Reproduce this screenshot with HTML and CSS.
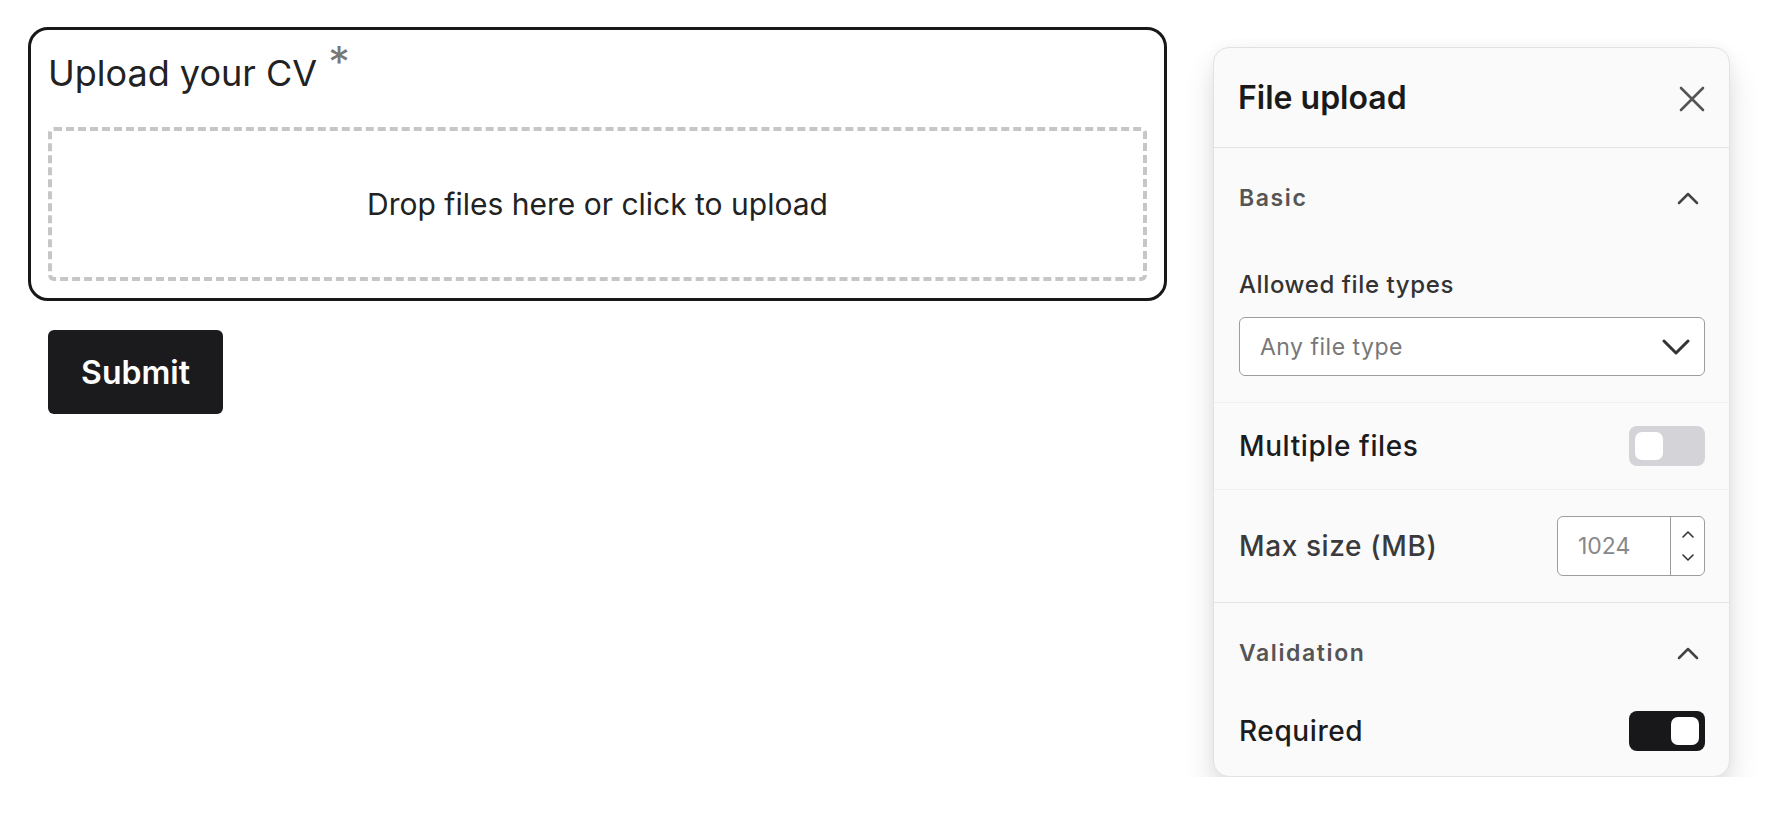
FILE: index.html
```html
<!DOCTYPE html>
<html lang="en">
<head>
<meta charset="utf-8">
<title>File upload</title>
<link rel="stylesheet" href="styles.css">
</head>
<body>
<div class="page">
  <div class="form-col">
    <div class="field-card">
      <div class="field-title">Upload your CV <span class="req">*</span></div>
      <div class="dropzone">Drop files here or click to upload</div>
    </div>
    <button class="submit" type="button">Submit</button>
  </div>

  <aside class="panel">
    <div class="panel-head">
      <div class="panel-title">File upload</div>
      <svg class="close" width="28" height="28" viewBox="0 0 28 28" fill="none" stroke="#555" stroke-width="2.6" stroke-linecap="round"><path d="M3 3 L25 25 M25 3 L3 25"/></svg>
    </div>

    <div class="section-head">
      <span class="section-name">Basic</span>
      <svg class="chev-up" width="22" height="14" viewBox="0 0 22 14" fill="none" stroke="#444" stroke-width="2.5" stroke-linecap="round" stroke-linejoin="round"><path d="M2 12 L11 3 L20 12"/></svg>
    </div>
    <div class="field-stack">
      <div class="label">Allowed file types</div>
      <div class="select">
        <span class="placeholder">Any file type</span>
        <svg width="28" height="18" viewBox="0 0 28 18" fill="none" stroke="#333" stroke-width="3" stroke-linecap="round" stroke-linejoin="round"><path d="M2 3 L14 15 L26 3"/></svg>
      </div>
    </div>
    <div class="row row-multi">
      <span class="row-label">Multiple files</span>
      <span class="toggle"><span class="knob"></span></span>
    </div>
    <div class="row row-size">
      <span class="row-label muted">Max size (MB)</span>
      <div class="number">
        <span class="num-value">1024</span>
        <span class="stepper">
          <svg width="14" height="9" viewBox="0 0 14 9" fill="none" stroke="#333" stroke-width="1.6" stroke-linecap="round" stroke-linejoin="round"><path d="M2 7 L7 2 L12 7"/></svg>
          <svg width="14" height="9" viewBox="0 0 14 9" fill="none" stroke="#333" stroke-width="1.6" stroke-linecap="round" stroke-linejoin="round"><path d="M2 2 L7 7 L12 2"/></svg>
        </span>
      </div>
    </div>

    <div class="section-head">
      <span class="section-name">Validation</span>
      <svg class="chev-up" width="22" height="14" viewBox="0 0 22 14" fill="none" stroke="#444" stroke-width="2.5" stroke-linecap="round" stroke-linejoin="round"><path d="M2 12 L11 3 L20 12"/></svg>
    </div>
    <div class="row row-required">
      <span class="row-label">Required</span>
      <span class="toggle on"><span class="knob"></span></span>
    </div>
  </aside>
</div>
</body>
</html>
```

FILE: styles.css
```css
* { box-sizing: border-box; }

html, body {
  margin: 0;
  padding: 0;
  background: #ffffff;
  font-family: Inter, "Noto Sans", "Liberation Sans", sans-serif;
  color: #1c1c1e;
}

.page {
  display: flex;
  align-items: flex-start;
  gap: 46px;
  padding: 27px 0 0 28px;
}

.form-col {
  width: 1139px;
  display: flex;
  flex-direction: column;
  align-items: flex-start;
}

.field-card {
  width: 100%;
  border: 3px solid #18181b;
  border-radius: 20px;
  padding: 21px 17px 17px;
  background: #fff;
}

.field-title {
  font-size: 36px;
  line-height: 44px;
  height: 44px;
  font-weight: 400;
  color: #222;
}

.req {
  color: #777;
  font-size: 43px;
  line-height: 0;
  vertical-align: 9px;
  margin-left: 1px;
}

.dropzone {
  margin-top: 32px;
  height: 154px;
  border: 4px dashed #c6c6c6;
  border-radius: 6px;
  display: flex;
  align-items: center;
  justify-content: center;
  font-size: 30px;
  color: #222;
}

.submit {
  margin: 29px 0 0 20px;
  width: 175px;
  height: 84px;
  border: none;
  border-radius: 6px;
  background: #1b1b1d;
  color: #fff;
  font-family: inherit;
  font-size: 32px;
  font-weight: 600;
  padding: 0;
}

/* panel */
.panel {
  margin-top: 20px;
  width: 517px;
  background: #fafafa;
  border: 1px solid #e2e2e2;
  border-radius: 16px;
  box-shadow: 0 18px 30px rgba(0, 0, 0, 0.13), 0 0 14px rgba(0, 0, 0, 0.04);
  overflow: hidden;
}

.panel-head {
  height: 100px;
  border-bottom: 1px solid #e3e3e3;
  padding: 0 23px 0 24px;
  display: flex;
  align-items: center;
  justify-content: space-between;
}

.panel-title {
  font-size: 32px;
  font-weight: 600;
  color: #1a1a1a;
}

.close { margin-top: 2px; }

.section-head {
  height: 80px;
  padding: 20px 30px 0 25px;
  display: flex;
  align-items: center;
  justify-content: space-between;
}

.section-name {
  font-size: 23px;
  font-weight: 600;
  letter-spacing: 1.6px;
  color: #555;
}

.field-stack {
  padding: 43px 24px 26px 25px;
  border-bottom: 1px solid #f0f0f0;
}

.label {
  font-size: 24px;
  line-height: 28px;
  font-weight: 500;
  letter-spacing: 0.6px;
  color: #333;
}

.select {
  margin-top: 18px;
  height: 59px;
  background: #fff;
  border: 1.5px solid #9d9d9d;
  border-radius: 6px;
  padding: 0 14px 0 20px;
  display: flex;
  align-items: center;
  justify-content: space-between;
}

.placeholder {
  font-size: 23px;
  letter-spacing: 0.5px;
  color: #777;
}

.row {
  display: flex;
  align-items: center;
  justify-content: space-between;
  padding: 0 24px 0 25px;
}

.row-multi {
  height: 87px;
  border-bottom: 1px solid #f0f0f0;
}

.row-size {
  height: 113px;
  border-bottom: 1px solid #e4e4e4;
}

.row-required {
  height: 93px;
  padding-top: 3px;
}

.row-label {
  font-size: 28px;
  font-weight: 500;
  letter-spacing: 0.6px;
  color: #1c1c1e;
}

.row-label.muted { color: #3a3a3c; }

.toggle {
  width: 76px;
  height: 40px;
  border-radius: 8px;
  background: #d4d4d8;
  padding: 6px;
  display: flex;
  align-items: center;
}

.knob {
  width: 28px;
  height: 28px;
  border-radius: 7px;
  background: #fff;
}

.toggle.on {
  background: #18181b;
  justify-content: flex-end;
}

.number {
  width: 148px;
  height: 60px;
  background: #fff;
  border: 1.5px solid #9d9d9d;
  border-radius: 6px;
  display: flex;
}

.num-value {
  flex: 1;
  display: flex;
  align-items: center;
  padding-left: 20px;
  font-size: 23px;
  color: #888;
}

.stepper {
  width: 34px;
  border-left: 1.5px solid #9d9d9d;
  display: flex;
  flex-direction: column;
  align-items: center;
  justify-content: center;
  gap: 14px;
}
```
